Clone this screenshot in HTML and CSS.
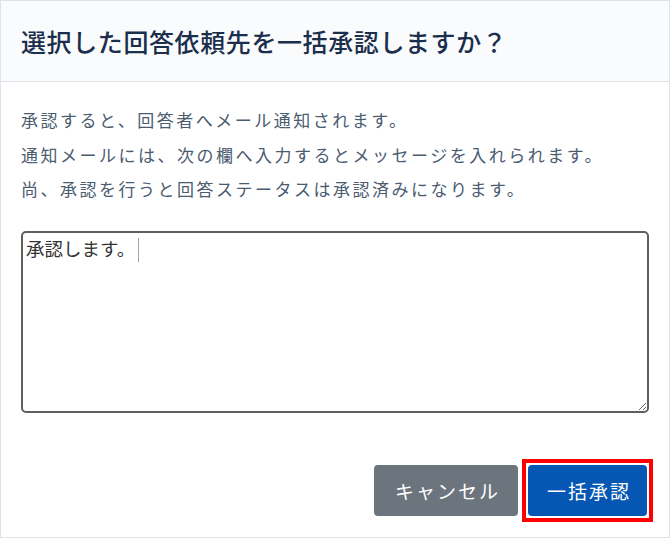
FILE: index.html
```html
<!DOCTYPE html>
<html lang="ja">
<head>
    <meta charset="UTF-8">
    <meta name="viewport" content="width=device-width, initial-scale=1.0">
    <title>一括承認</title>
    <link rel="stylesheet" href="styles.css">
</head>
<body>
    <div class="modal">
        <div class="modal-header">
            <h2 class="modal-title">選択した回答依頼先を一括承認しますか？</h2>
        </div>

        <div class="modal-body">
            <p>承認すると、回答者へメール通知されます。</p>
            <p>通知メールには、次の欄へ入力するとメッセージを入れられます。</p>
            <p>尚、承認を行うと回答ステータスは承認済みになります。</p>

            <!-- 通知メールに添えるメッセージ -->
            <div class="message-box" contenteditable="true">承認します。<span class="caret"></span></div>
        </div>

        <div class="modal-footer">
            <button class="btn btn-cancel">キャンセル</button>
            <span class="highlight">
                <button class="btn btn-approve">一括承認</button>
            </span>
        </div>
    </div>
</body>
</html>
```

FILE: styles.css
```css
body {
    margin: 0;
    font-family: "Noto Sans CJK JP", "Noto Sans", sans-serif;
    background-color: #fff;
}
.modal {
    width: 670px;
    height: 538px;
    box-sizing: border-box;
    border: 1px solid #dee3ea;
    display: flex;
    flex-direction: column;
}
.modal-header {
    height: 80px;
    padding: 0 20px;
    display: flex;
    align-items: center;
    background-color: #f9fbfd;
    border-bottom: 1px solid #dee3ea;
}
.modal-title {
    margin: 0;
    font-size: 25px;
    font-weight: 500;
    letter-spacing: 0.6px;
    color: #1b2e4c;
}
.modal-body {
    padding: 21px 20px 0;
}
.modal-body p {
    margin: 0;
    font-size: 17px;
    line-height: 34.5px;
    letter-spacing: 2.5px;
    color: #4b5b70;
}
.message-box {
    margin-top: 24px;
    height: 174px;
    padding: 2px 3px;
    border: 2px solid #5f5f5f;
    border-radius: 5px;
    font-size: 18.5px;
    line-height: 27px;
    color: #333;
    overflow: auto;
    resize: both;
    outline: none;
}
.caret {
    display: inline-block;
    width: 1px;
    height: 24px;
    margin-left: 3px;
    vertical-align: middle;
    background-color: #a8a8a8;
}
.modal-footer {
    margin-top: auto;
    padding: 0 16px 15px 20px;
    display: flex;
    align-items: center;
    justify-content: flex-end;
    gap: 4px;
}
.btn {
    height: 51px;
    padding: 0 18px 0 21px;
    border: none;
    border-radius: 4px;
    font-family: inherit;
    font-size: 19px;
    letter-spacing: 2px;
    color: #fff;
    cursor: pointer;
}
.btn-cancel {
    background-color: #6c757d;
}
/* 赤枠で強調 */
.highlight {
    display: flex;
    padding: 2px;
    border: 4px solid #f00;
}
.btn-approve {
    padding: 0 16px 0 19px;
    background-color: #0657b3;
}
```
